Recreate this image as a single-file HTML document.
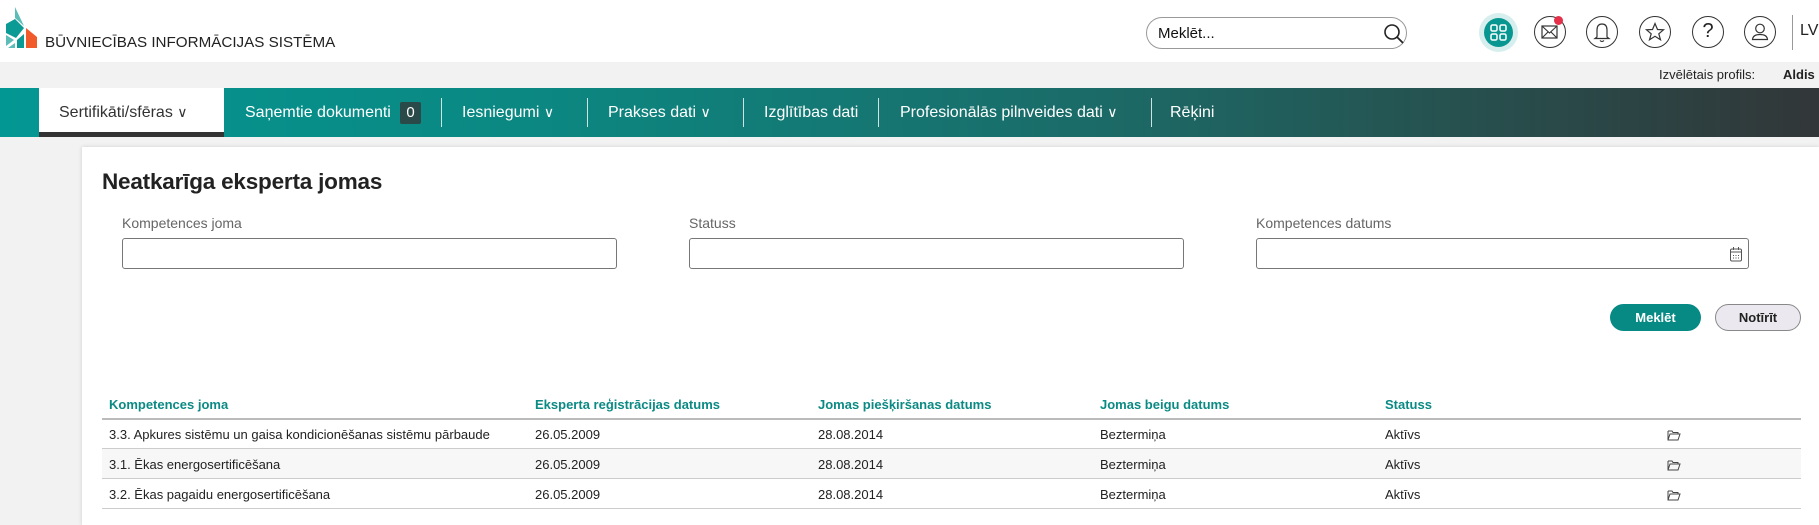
<!DOCTYPE html>
<html><head><meta charset="utf-8"><style>
*{margin:0;padding:0;box-sizing:border-box}
body{width:1819px;height:525px;background:#f2f2f2;font-family:"Liberation Sans",Arial,sans-serif;position:relative;overflow:hidden;color:#333}
.abs{position:absolute}
.hdr{left:0;top:0;width:1819px;height:62px;background:#fff}
.logo-t{left:45px;top:34px;font-size:15.2px;color:#222;letter-spacing:0}
.search{left:1146px;top:17px;width:261px;height:32px;border:1px solid #999;border-radius:16px;background:#fff}
.search span{position:absolute;left:11px;top:7px;font-size:15px;color:#111}
.ic{width:32px;height:32px;border:1.3px solid #333;border-radius:50%;top:16px;background:#fff}
.prof{top:67px;font-size:13px;color:#222}
.nav{left:0;top:88px;width:1819px;height:49px;background:linear-gradient(90deg,#039793 0%,#0c8781 30%,#1b6b68 60%,#26514f 80%,#323638 100%)}
.ni{top:16px;color:#fff;font-size:16px;white-space:nowrap}
.sep{top:10px;width:1px;height:29px;background:#cfe3e2}
.act{left:39px;top:0;width:185px;height:49px;background:#fff;border-bottom:5px solid #333}
.card{left:82px;top:147px;width:1737px;height:378px;background:#fff;box-shadow:0 0 4px rgba(0,0,0,.15)}
h1{position:absolute;left:102px;top:169px;font-size:22.5px;font-weight:bold;color:#222;font-family:"Liberation Sans",sans-serif;letter-spacing:-.2px}
.lbl{top:215px;font-size:14px;color:#666}
.inp{top:238px;height:31px;border:1px solid #777;border-radius:3px;background:#fff}
.btn{top:304px;height:27px;border-radius:14px;font-size:13px;font-weight:bold;text-align:center;line-height:27px}
.th{top:397px;font-size:13px;font-weight:bold;color:#0b8a84}
.td{font-size:13px;color:#222}
.line{left:102px;width:1699px;height:1px;background:#ccc}
</style></head><body>
<div class="abs hdr"></div>
<svg class="abs" style="left:0;top:0" width="42" height="52">
<polygon points="15,7 24,26 15,18" fill="#5bbcb8"/>
<polygon points="6,24 15,19 24,28 16,38 6,33" fill="#0c9a94"/>
<polygon points="6,35 14,40 6,46" fill="#5bbcb8"/>
<polygon points="17,40 24,34 24,48 17,48" fill="#0c9a94"/>
<polygon points="8,48 15,43 15,48" fill="#5bbcb8"/>
<polygon points="26,28 37,37 37,48 26,48" fill="#f15a2b"/>
</svg>
<div class="abs logo-t">BŪVNIECĪBAS INFORMĀCIJAS SISTĒMA</div>
<div class="abs search"><span>Meklēt...</span>
<svg class="abs" style="left:236px;top:5px" width="22" height="22"><circle cx="9" cy="9" r="7" fill="none" stroke="#222" stroke-width="1.6"/><line x1="14" y1="14" x2="20" y2="20" stroke="#222" stroke-width="1.8"/></svg></div>
<div class="abs" style="left:1479px;top:13px;width:39px;height:39px;border-radius:50%;background:#d6eeed"></div>
<div class="abs" style="left:1484px;top:18px;width:29px;height:29px;border-radius:50%;background:#089690"></div>
<svg class="abs" style="left:1490px;top:24px" width="17" height="17"><g fill="none" stroke="#fff" stroke-width="1.5"><rect x="1" y="1" width="6" height="6" rx="1.5"/><rect x="10" y="1" width="6" height="6" rx="1.5"/><rect x="1" y="10" width="6" height="6" rx="1.5"/><rect x="10" y="10" width="6" height="6" rx="1.5"/></g></svg>
<div class="abs ic" style="left:1534px"><svg width="30" height="30"><rect x="7" y="9" width="15" height="12" fill="none" stroke="#333" stroke-width="1.2"/><path d="M7 9 L14.5 16 L22 9 M7 21 L13 15 M22 21 L16 15" fill="none" stroke="#333" stroke-width="1.1"/></svg></div>
<div class="abs" style="left:1554px;top:16px;width:9px;height:9px;border-radius:50%;background:#e5304a"></div>
<div class="abs ic" style="left:1586px"><svg width="30" height="30"><path d="M10 20 L10 13 Q10 7 15 7 Q20 7 20 13 L20 20 L22 21.5 L8 21.5 Z M13 23.5 Q15 25.5 17 23.5" fill="none" stroke="#333" stroke-width="1.2"/></svg></div>
<div class="abs ic" style="left:1639px"><svg width="30" height="30"><path d="M15 6.5 L17.5 12.5 L23.5 12.8 L18.8 16.8 L20.5 22.8 L15 19.3 L9.5 22.8 L11.2 16.8 L6.5 12.8 L12.5 12.5 Z" fill="none" stroke="#333" stroke-width="1.2"/></svg></div>
<div class="abs ic" style="left:1692px;text-align:center;font-size:20px;line-height:29px;color:#222">?</div>
<div class="abs ic" style="left:1744px"><svg width="30" height="30"><circle cx="15" cy="11.5" r="4.3" fill="none" stroke="#333" stroke-width="1.2"/><path d="M7.5 22.5 Q8 17.5 15 17.5 Q22 17.5 22.5 22.5 Z" fill="none" stroke="#333" stroke-width="1.2"/></svg></div>
<div class="abs" style="left:1792px;top:15px;width:1px;height:35px;background:#999"></div>
<div class="abs" style="left:1800px;top:22px;font-size:16px;color:#222">LV</div>
<div class="abs prof" style="left:1659px">Izvēlētais profils:</div>
<div class="abs prof" style="left:1783px;font-weight:bold">Aldis</div>

<div class="abs nav">
<div class="abs act"></div>
<div class="abs ni" style="left:59px;color:#333">Sertifikāti/sfēras <span style="font-size:14px">&#x2228;</span></div>
<div class="abs ni" style="left:245px">Saņemtie dokumenti</div>
<div class="abs" style="left:400px;top:14px;width:21px;height:22px;background:#2a4a49;border-radius:2px;color:#fff;font-size:15px;text-align:center;line-height:22px">0</div>
<div class="abs sep" style="left:441px"></div>
<div class="abs ni" style="left:462px">Iesniegumi <span style="font-size:14px">&#x2228;</span></div>
<div class="abs sep" style="left:587px"></div>
<div class="abs ni" style="left:608px">Prakses dati <span style="font-size:14px">&#x2228;</span></div>
<div class="abs sep" style="left:743px"></div>
<div class="abs ni" style="left:764px">Izglītības dati</div>
<div class="abs sep" style="left:878px"></div>
<div class="abs ni" style="left:900px">Profesionālās pilnveides dati <span style="font-size:14px">&#x2228;</span></div>
<div class="abs sep" style="left:1151px"></div>
<div class="abs ni" style="left:1170px">Rēķini</div>
</div>

<div class="abs card"></div>
<h1>Neatkarīga eksperta jomas</h1>
<div class="abs lbl" style="left:122px">Kompetences joma</div>
<div class="abs lbl" style="left:689px">Statuss</div>
<div class="abs lbl" style="left:1256px">Kompetences datums</div>
<div class="abs inp" style="left:122px;width:495px"></div>
<div class="abs inp" style="left:689px;width:495px"></div>
<div class="abs inp" style="left:1256px;width:493px">
<svg class="abs" style="left:472px;top:7px" width="14" height="16"><rect x="1.5" y="3" width="11" height="12" rx="1.5" fill="none" stroke="#555" stroke-width="1"/><line x1="1.5" y1="6" x2="12.5" y2="6" stroke="#555"/><line x1="4.5" y1="1" x2="4.5" y2="4" stroke="#555"/><line x1="9.5" y1="1" x2="9.5" y2="4" stroke="#555"/><g fill="#555"><rect x="4" y="9" width="1" height="1"/><rect x="6.5" y="9" width="1" height="1"/><rect x="9" y="9" width="1" height="1"/><rect x="4" y="11.5" width="1" height="1"/><rect x="6.5" y="11.5" width="1" height="1"/><rect x="9" y="11.5" width="1" height="1"/></g></svg></div>
<div class="abs btn" style="left:1610px;width:91px;background:#078a84;color:#fff">Meklēt</div>
<div class="abs btn" style="left:1715px;width:86px;background:#ebe9ef;border:1px solid #888;color:#222;line-height:25px">Notīrīt</div>

<div class="abs th" style="left:109px">Kompetences joma</div>
<div class="abs th" style="left:535px">Eksperta reģistrācijas datums</div>
<div class="abs th" style="left:818px">Jomas piešķiršanas datums</div>
<div class="abs th" style="left:1100px">Jomas beigu datums</div>
<div class="abs th" style="left:1385px">Statuss</div>
<div class="abs line" style="top:418px;height:2px;background:#bbb"></div>
<div class="abs" style="left:102px;top:449px;width:1699px;height:29px;background:#f7f7f7"></div>
<div class="abs line" style="top:448px"></div>
<div class="abs line" style="top:478px"></div>
<div class="abs line" style="top:508px"></div>

<div class="abs td" style="left:109px;top:427px">3.3. Apkures sistēmu un gaisa kondicionēšanas sistēmu pārbaude</div>
<div class="abs td" style="left:109px;top:457px">3.1. Ēkas energosertificēšana</div>
<div class="abs td" style="left:109px;top:487px">3.2. Ēkas pagaidu energosertificēšana</div>
<div class="abs td" style="left:535px;top:427px">26.05.2009</div>
<div class="abs td" style="left:535px;top:457px">26.05.2009</div>
<div class="abs td" style="left:535px;top:487px">26.05.2009</div>
<div class="abs td" style="left:818px;top:427px">28.08.2014</div>
<div class="abs td" style="left:818px;top:457px">28.08.2014</div>
<div class="abs td" style="left:818px;top:487px">28.08.2014</div>
<div class="abs td" style="left:1100px;top:427px">Beztermiņa</div>
<div class="abs td" style="left:1100px;top:457px">Beztermiņa</div>
<div class="abs td" style="left:1100px;top:487px">Beztermiņa</div>
<div class="abs td" style="left:1385px;top:427px">Aktīvs</div>
<div class="abs td" style="left:1385px;top:457px">Aktīvs</div>
<div class="abs td" style="left:1385px;top:487px">Aktīvs</div>
<svg class="abs" style="left:1667px;top:429px" width="14" height="12"><path d="M1 2 L5 2 L6 3.5 L11 3.5 L11 5 M1 2 L1 11 L11 11 L13 5 L3 5 L1 11" fill="none" stroke="#444" stroke-width="1"/></svg>
<svg class="abs" style="left:1667px;top:459px" width="14" height="12"><path d="M1 2 L5 2 L6 3.5 L11 3.5 L11 5 M1 2 L1 11 L11 11 L13 5 L3 5 L1 11" fill="none" stroke="#444" stroke-width="1"/></svg>
<svg class="abs" style="left:1667px;top:489px" width="14" height="12"><path d="M1 2 L5 2 L6 3.5 L11 3.5 L11 5 M1 2 L1 11 L11 11 L13 5 L3 5 L1 11" fill="none" stroke="#444" stroke-width="1"/></svg>
</body></html>
